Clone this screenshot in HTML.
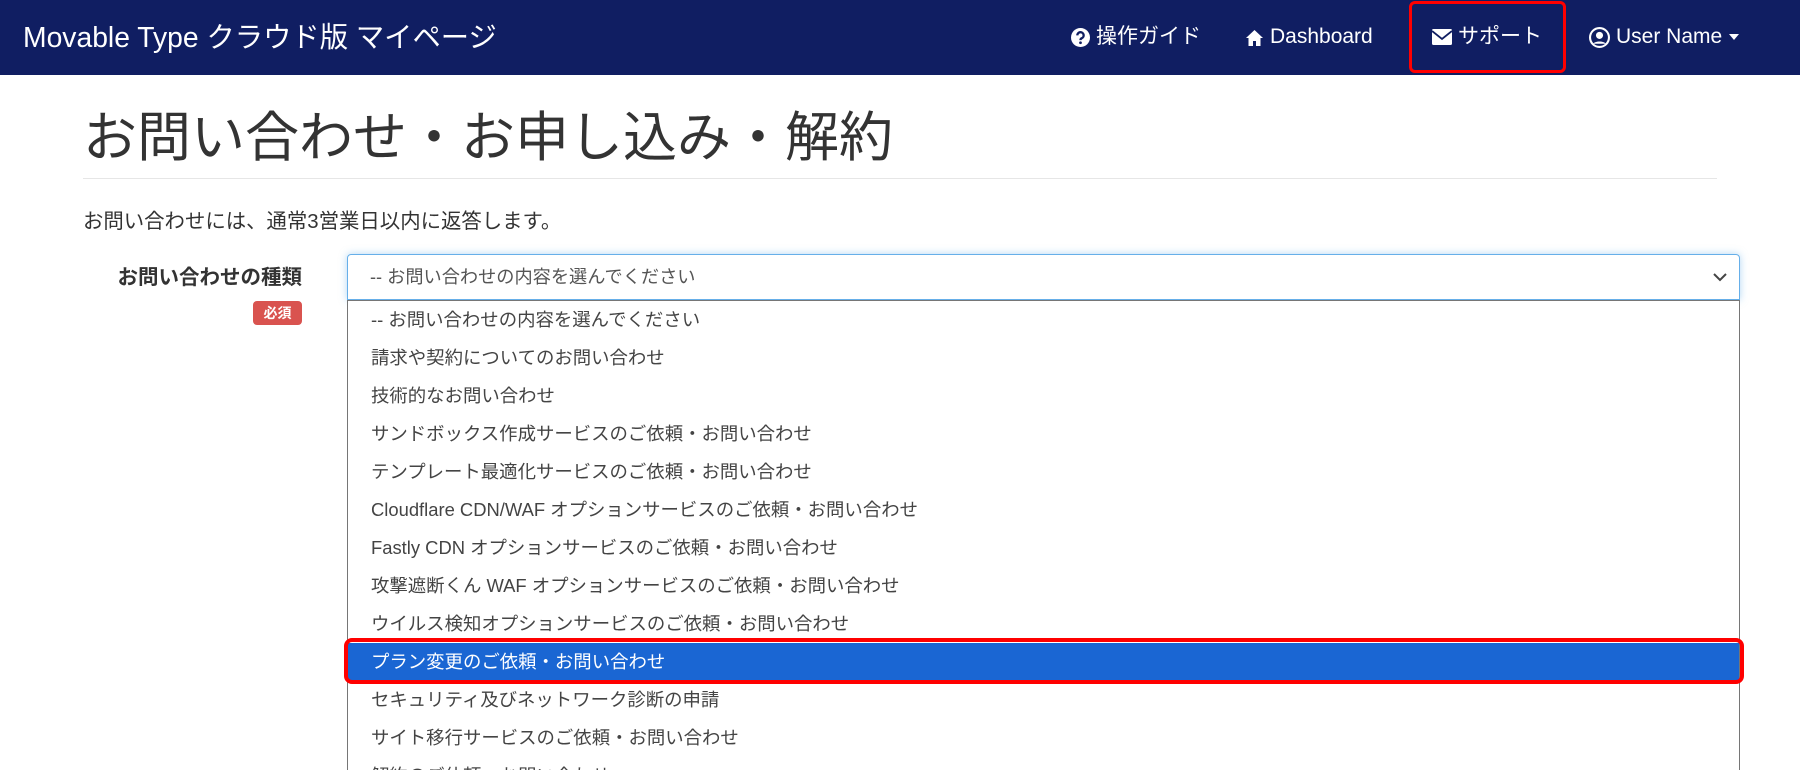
<!DOCTYPE html>
<html><head><meta charset="utf-8">
<style>
*{box-sizing:border-box;margin:0;padding:0}
html,body{width:1800px;height:770px;overflow:hidden}
body{background:#fff;font-family:"Liberation Sans","Noto Sans CJK JP",sans-serif;color:#333;position:relative}
.nav{position:absolute;left:0;top:0;width:1800px;height:75px;background:#101e62;color:#fff}
.brand{position:absolute;left:23px;top:19px;font-size:28.3px;line-height:36px;white-space:nowrap}
.ni{position:absolute;top:23px;font-size:21px;line-height:28px;display:flex;align-items:center;gap:6px;white-space:nowrap}
.redbox{position:absolute;left:1409px;top:1px;width:157px;height:72px;border:3px solid #f00;border-radius:6px}
h1{position:absolute;left:83px;top:103px;font-size:54px;font-weight:normal;line-height:70px;color:#333;white-space:nowrap}
.hr{position:absolute;left:83px;top:178px;width:1634px;height:1px;background:#e6e6e6}
.p{position:absolute;left:83px;top:208px;font-size:20.4px;line-height:28px;white-space:nowrap}
.lbl{position:absolute;right:1498px;top:263px;font-size:20.5px;font-weight:bold;line-height:30px;white-space:nowrap}
.badge{position:absolute;left:253px;top:301px;width:49px;height:24px;background:#d9534f;color:#fff;border-radius:4px;font-size:14px;font-weight:bold;text-align:center;line-height:24px}
.sel{position:absolute;left:347px;top:254px;width:1393px;height:46px;border:1px solid #66afe9;border-radius:4px 4px 0 0;box-shadow:0 0 8px rgba(102,175,233,.5);font-size:18.2px;line-height:44px;padding-left:22px;color:#555}
.chev{position:absolute;right:12px;top:17px}
.list{position:absolute;left:347px;top:300px;width:1393px;height:480px;border:1px solid #767676;background:#fff;overflow:hidden}
.it{height:38px;line-height:38px;font-size:18.4px;padding-left:23px;color:#444;white-space:nowrap}
.hl{background:#1a66d3;color:#fff}
.red2{position:absolute;left:344px;top:638px;width:1400px;height:46px;border:4px solid #f00;border-radius:8px}
</style></head><body>
<div class="nav">
<div class="brand">Movable Type クラウド版 マイページ</div>
<div class="ni" style="left:1071px"><svg width="19" height="19" viewBox="0 0 18 18"><circle cx="9" cy="9" r="9" fill="#fff"/><path d="M6 7a3 3 0 1 1 4 2.8c-.8.4-1 .8-1 1.7" stroke="#101e62" stroke-width="2.2" fill="none"/><circle cx="9" cy="14" r="1.3" fill="#101e62"/></svg>操作ガイド</div>
<div class="ni" style="left:1245px"><svg width="19" height="17" viewBox="0 0 19 17"><path d="M9.5 1L1 9h2.5v8h4.5v-5h3v5h4.5V9H18z" fill="#fff"/></svg>Dashboard</div>
<div class="ni" style="left:1432px"><svg width="20" height="16" viewBox="0 0 20 16"><rect x="0" y="0" width="20" height="16" rx="1.5" fill="#fff"/><path d="M0 2l10 8 10-8" stroke="#101e62" stroke-width="1.8" fill="none"/></svg>サポート</div>
<div class="redbox"></div>
<div class="ni" style="left:1589px"><svg width="21" height="21" viewBox="0 0 20 20"><circle cx="10" cy="10" r="9" fill="none" stroke="#fff" stroke-width="2"/><circle cx="10" cy="8" r="3.4" fill="#fff"/><path d="M4 16c1.5-3 10.5-3 12 0" fill="#fff"/></svg>User Name <svg width="12" height="8" viewBox="0 0 12 8"><path d="M1 1h10L6 7z" fill="#fff"/></svg></div>
</div>
<h1>お問い合わせ・お申し込み・解約</h1>
<div class="hr"></div>
<div class="p">お問い合わせには、通常3営業日以内に返答します。</div>
<div class="lbl">お問い合わせの種類</div>
<div class="badge">必須</div>
<div class="sel">-- お問い合わせの内容を選んでください<svg class="chev" width="14" height="10" viewBox="0 0 14 10"><path d="M1 2l6 6 6-6" stroke="#444" stroke-width="2" fill="none"/></svg></div>
<div class="list">
<div class="it">-- お問い合わせの内容を選んでください</div>
<div class="it">請求や契約についてのお問い合わせ</div>
<div class="it">技術的なお問い合わせ</div>
<div class="it">サンドボックス作成サービスのご依頼・お問い合わせ</div>
<div class="it">テンプレート最適化サービスのご依頼・お問い合わせ</div>
<div class="it">Cloudflare CDN/WAF オプションサービスのご依頼・お問い合わせ</div>
<div class="it">Fastly CDN オプションサービスのご依頼・お問い合わせ</div>
<div class="it">攻撃遮断くん WAF オプションサービスのご依頼・お問い合わせ</div>
<div class="it">ウイルス検知オプションサービスのご依頼・お問い合わせ</div>
<div class="it hl">プラン変更のご依頼・お問い合わせ</div>
<div class="it">セキュリティ及びネットワーク診断の申請</div>
<div class="it">サイト移行サービスのご依頼・お問い合わせ</div>
<div class="it">解約のご依頼・お問い合わせ</div>
</div>
<div class="red2"></div>
</body></html>
